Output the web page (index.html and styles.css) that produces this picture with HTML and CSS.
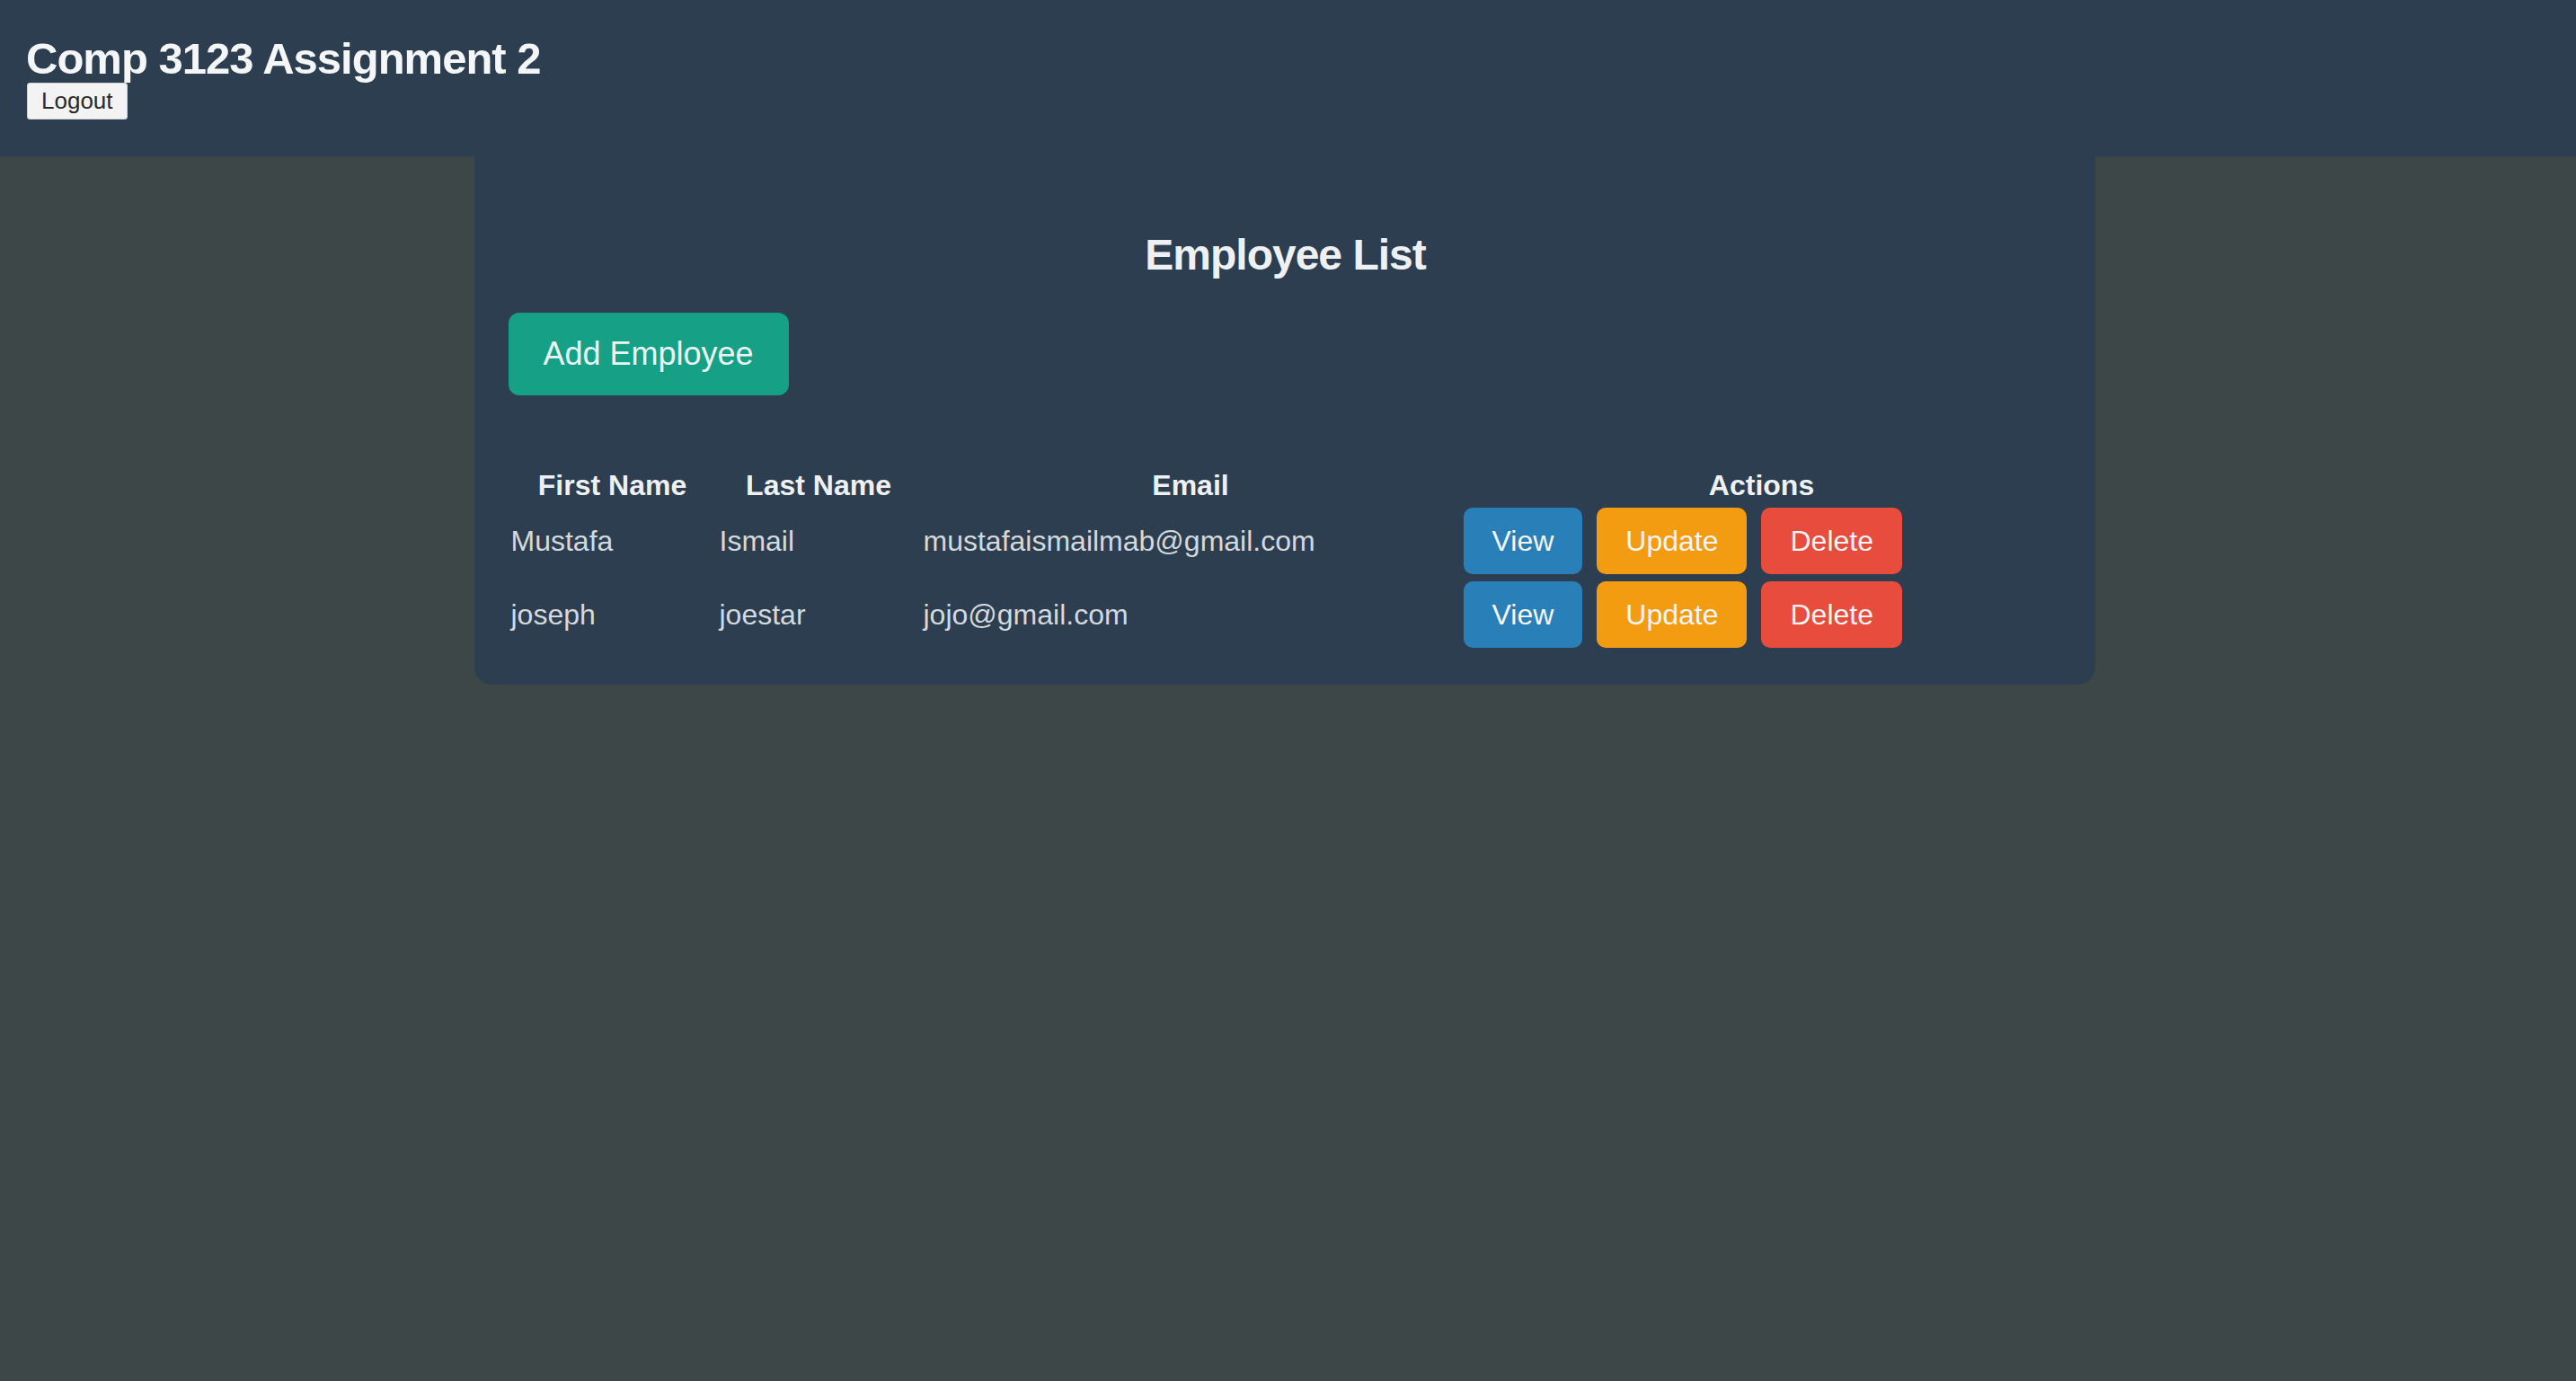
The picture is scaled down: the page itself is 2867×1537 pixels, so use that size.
FILE: index.html
```html
<!DOCTYPE html>
<html lang="en">
<head>
<meta charset="utf-8">
<title>Comp 3123 Assignment 2</title>
<link rel="stylesheet" href="styles.css">
</head>
<body>
<header class="topbar">
  <h1 class="app-title">Comp 3123 Assignment 2</h1>
  <button class="logout-btn" type="button">Logout</button>
</header>
<main class="panel">
  <h2 class="panel-title">Employee List</h2>
  <button class="add-btn" type="button">Add Employee</button>
  <table class="emp-table">
    <thead>
      <tr>
        <th class="col-first">First Name</th>
        <th class="col-last">Last Name</th>
        <th class="col-email">Email</th>
        <th class="col-actions">Actions</th>
      </tr>
    </thead>
    <tbody>
      <tr>
        <td>Mustafa</td>
        <td>Ismail</td>
        <td>mustafaismailmab@gmail.com</td>
        <td>
          <div class="actions">
            <button class="btn btn-view" type="button">View</button>
            <button class="btn btn-update" type="button">Update</button>
            <button class="btn btn-delete" type="button">Delete</button>
          </div>
        </td>
      </tr>
      <tr>
        <td>joseph</td>
        <td>joestar</td>
        <td>jojo@gmail.com</td>
        <td>
          <div class="actions">
            <button class="btn btn-view" type="button">View</button>
            <button class="btn btn-update" type="button">Update</button>
            <button class="btn btn-delete" type="button">Delete</button>
          </div>
        </td>
      </tr>
    </tbody>
  </table>
</main>
</body>
</html>
```

FILE: styles.css
```css
html, body {
  margin: 0;
  padding: 0;
}

body {
  background: #3d4748;
  font-family: "Liberation Sans", Arial, Helvetica, sans-serif;
  color: #ecf0f1;
  min-height: 1537px;
}

.topbar {
  background: #2c3e50;
  height: 174px;
  box-sizing: border-box;
  padding: 38px 0 0 29px;
}

.app-title {
  margin: 0;
  font-size: 49px;
  line-height: 55px;
  font-weight: bold;
  letter-spacing: -1px;
  color: #f4f6f7;
}

.logout-btn {
  display: block;
  margin: -1px 0 0 1px;
  font-family: "Liberation Sans", Arial, Helvetica, sans-serif;
  font-size: 26px;
  line-height: 31px;
  padding: 4px 15px;
  background: #f3f3f3;
  color: #2a2a2a;
  border: 1px solid #cfd3d6;
  border-radius: 3px;
}

.panel {
  width: 1804px;
  box-sizing: border-box;
  margin: 0 auto;
  padding: 40px 36px 37px 38px;
  background: #2c3e50;
  border-radius: 0 0 20px 20px;
  position: relative;
  left: -4px;
}

.panel-title {
  margin: 42px 0 37px;
  text-align: center;
  font-size: 48px;
  line-height: 55px;
  font-weight: bold;
  letter-spacing: -1px;
  color: #eef1f3;
}

.add-btn {
  display: block;
  margin: 0;
  font-family: "Liberation Sans", Arial, Helvetica, sans-serif;
  font-size: 36px;
  line-height: 42px;
  padding: 25px 39px;
  background: #16a085;
  color: #e9f6f3;
  border: none;
  border-radius: 12px;
}

.emp-table {
  margin-top: 79px;
  width: 1730px;
  table-layout: fixed;
  border-collapse: collapse;
  font-size: 32px;
  line-height: 36px;
}

.emp-table th,
.emp-table td {
  box-sizing: border-box;
}

.emp-table th {
  padding: 3px 3px;
  font-weight: bold;
  text-align: center;
  color: #eef1f3;
}

.emp-table td {
  padding: 4px 3px;
  text-align: left;
  color: #d3d9dd;
  vertical-align: middle;
}

.col-first { width: 232px; }
.col-last { width: 227px; }
.col-email { width: 601px; }
.col-actions { width: 670px; }

.actions {
  display: flex;
  gap: 16px;
}

.btn {
  font-family: "Liberation Sans", Arial, Helvetica, sans-serif;
  font-size: 32px;
  line-height: 36px;
  padding: 19px 32px;
  border: none;
  border-radius: 10px;
  color: #f4f6f7;
  margin: 0;
}

.btn-view { background: #2980b9; }
.btn-update { background: #f39c12; }
.btn-delete { background: #e74c3c; }
```
